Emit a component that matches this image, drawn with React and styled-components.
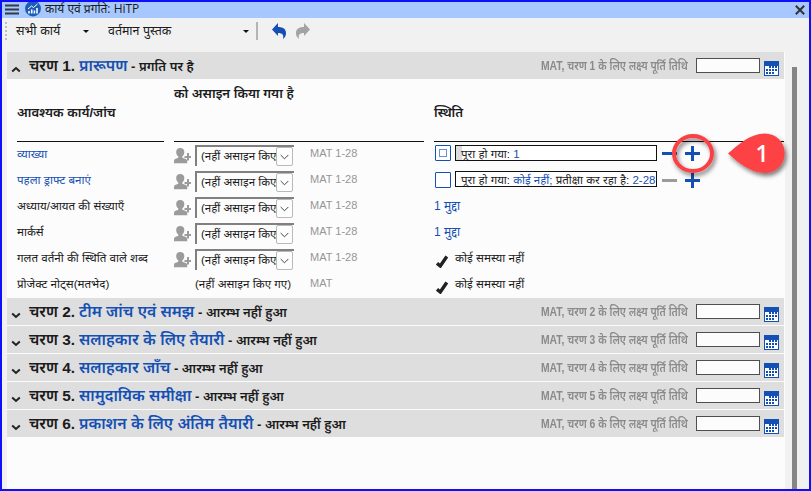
import React from "react";
import styled, { createGlobalStyle } from "styled-components";

const BLUE = "#1450b4";
const SANS = '"Liberation Sans", "Noto Sans Devanagari", "Noto Sans", sans-serif';
const UI = '"Open Sans", "Noto Sans Devanagari", "Noto Sans", sans-serif';

const Global = createGlobalStyle`
  * { box-sizing: border-box; }
  body { margin: 0; overflow: hidden; }
`;

const Window = styled.div`
  position: relative;
  width: 811px;
  height: 491px;
  border: 2px solid #0f0ffa;
  background: #f1f1f1;
  color: #1b1b1b;
  font-family: ${SANS};
  font-size: 12px;
  overflow: hidden;
  display: flex;
  flex-direction: column;
`;

const TitleBar = styled.header`
  height: 16px;
  flex: none;
  background: #a6c8ff;
  display: flex;
  align-items: center;
  padding: 0 4px 0 3px;
`;

const Label = styled.span`
  display: block;
  flex: none;
  white-space: nowrap;
  line-height: ${(p) => p.$lh || 24}px;
  width: ${(p) => (p.$w ? `${p.$w}px` : "auto")};
  color: ${(p) => p.$color || "inherit"};
  font-size: ${(p) => p.$size || 11.6}px;
`;

const TitleText = styled(Label)`
  font-family: ${UI};
  margin: 0 0 2px 4px;
  flex: 1;
`;

const BadgeSvg = styled.svg`
  flex: none;
  margin-left: 6px;
`;

const Toolbar = styled.div`
  height: 34px;
  flex: none;
  display: flex;
  align-items: center;
  padding: 0 0 8px 3px;
`;

const Grip = styled.div`
  width: 2px;
  height: 18px;
  margin-right: 9px;
  background: repeating-linear-gradient(#bdbdbd 0 2px, transparent 2px 4px);
`;

const Caret = styled.i`
  width: 0;
  height: 0;
  border: 3px solid transparent;
  border-top-color: #111;
  border-bottom: 0;
  margin-right: ${(p) => p.$gap}px;
`;

const Divider = styled.div`
  width: 2px;
  height: 18px;
  background: #b4b4b4;
  margin-right: 14px;
`;

const Main = styled.div`
  flex: 1;
  display: flex;
  padding-left: 5px;
`;

const Content = styled.main`
  width: 777px;
  margin-right: 8px;
  background: #fcfcfc;
  box-shadow: 1px 0 #fcfcfc;
`;

const ScrollThumb = styled.div`
  width: 5px;
  margin-top: 15px;
  background: #858585;
`;

const StageBar = styled.div`
  height: 27px;
  margin-bottom: 1px;
  background: #dedede;
  display: flex;
  align-items: center;
  padding-right: 5px;
`;

const Chevron = styled.svg`
  flex: none;
  width: 10px;
  height: 7px;
  margin: 8px 8px 0 4px;
`;

const StageTitle = styled.div`
  flex: 1;
  display: flex;
  align-items: baseline;
  white-space: pre;
  line-height: 27px;
  font-weight: 600;
  font-size: 15.8px;
`;

const StageNumber = styled.span`
  width: 50px;
  font-size: 15.4px;
`;

const StageName = styled.span`
  color: ${BLUE};
`;

const StageState = styled.span`
  font-size: 13px;
`;

const Due = styled(Label)`
  color: #8a8a8a;
  font-weight: 600;
  font-size: 12px;
  margin-right: 8px;
  transform: scaleX(0.865);
  transform-origin: right;
`;

const DateBox = styled.div`
  width: 64px;
  height: 15px;
  margin: 0 4px 0 0;
  border: 1px solid #4f4f4f;
  background: #fcfcfc;
`;

const CalSvg = styled.svg`
  flex: none;
  margin-top: 6px;
`;

const Table = styled.div`
  height: 218px;
  padding: 0 0 0 10px;
`;

const Columns = styled.div`
  display: grid;
  grid-template-columns: 147px 250px 350px;
  column-gap: 10px;
`;

const HeadCell = styled.div`
  height: 62px;
  border-bottom: 1px solid #111;
  padding-top: ${(p) => p.$top}px;
  font-weight: 600;
  font-size: 13.1px;
  white-space: nowrap;
  line-height: 26px;
`;

const Row = styled(Columns)`
  height: 26px;
`;

const Cell = styled.div`
  height: 26px;
  display: flex;
  align-items: flex-start;
`;

const PersonSvg = styled.svg`
  flex: none;
  margin: 5px 4px 0 0;
`;

const Unassigned = styled(Label)`
  margin-left: 21px;
  width: 115px;
`;

const Reference = styled(Label)`
  color: #969696;
  font-size: 11px;
  line-height: 22px;
`;

const Select = styled.div`
  width: 99px;
  height: 21px;
  margin: 3px 16px 0 0;
  padding-left: 4px;
  border: solid #808080;
  border-width: 2px 0 0 2px;
  display: flex;
  align-items: center;
  background: #fcfcfc;
`;

const SelectText = styled.span`
  width: 75px;
  line-height: 19px;
  overflow: hidden;
  white-space: nowrap;
  font-size: 11.5px;
`;

const SelectArrow = styled.span`
  width: 17px;
  height: 19px;
  border: 1px solid #b9b9b9;
  border-radius: 2px;
  background: #fdfdfd;
  display: flex;
  align-items: center;
  justify-content: center;
`;

const Check = styled.div`
  width: 16px;
  height: 16px;
  margin: ${(p) => (p.$partial ? 3 : 4)}px 4px 0 1px;
  border: 1px solid ${BLUE};
  border-radius: 1px;
  background: #fff;
  display: flex;
  align-items: center;
  justify-content: center;
`;

const CheckInner = styled.i`
  width: 8px;
  height: 8px;
  border: 1px solid #6b8fce;
`;

const Progress = styled.div`
  width: 202px;
  height: 16px;
  margin: 3px 5px 0 0;
  border: 1px solid #111;
  white-space: pre;
  line-height: 16px;
  font-size: 11.5px;
  padding-left: 5px;
  background: ${(p) => (p.$started ? "linear-gradient(90deg, #dcdcdc 6px, #fff 6px)" : "#fff")};
`;

const Link = styled.span`
  color: ${BLUE};
`;

const Steps = styled.svg`
  flex: none;
  margin: ${(p) => p.$top}px 0 0 0;
`;

const Tick = styled.svg`
  flex: none;
  margin: 9px 7px 0 2px;
`;

const CleanText = styled(Label)`
  font-size: 11.7px;
`;

const Marker = styled.svg`
  position: absolute;
  left: 658px;
  top: 123px;
  overflow: visible;
  font-family: ${UI};
`;

function Calendar() {
  const dots = [];
  for (let r = 0; r < 3; r++)
    for (let c = 0; c < 4; c++)
      if (!(r === 0 && c === 0) && !(r === 2 && c === 3))
        dots.push(<rect key={`${r}${c}`} x={2 + c * 3} y={5 + r * 3} width="2" height="2" fill={BLUE} />);
  return (
    <CalSvg width="15" height="15" shapeRendering="crispEdges">
      <rect width="15" height="15" fill={BLUE} />
      <rect x="1" y="5" width="13" height="9" fill="#fff" />
      {dots}
    </CalSvg>
  );
}

function Stage({ n, name, state, open }) {
  return (
    <StageBar>
      <Chevron viewBox="0 0 10 7">
        <path d={open ? "M1.2 5.5 5 2l3.8 3.5" : "M1.2 1.5 5 5l3.8-3.5"} fill="none" stroke="#222" strokeWidth="2" />
      </Chevron>
      <StageTitle>
        <StageNumber>चरण {n}.</StageNumber>
        <StageName>{name}</StageName>
        <StageState> - {state}</StageState>
      </StageTitle>
      <Due>MAT, चरण {n} के लिए लक्ष्य पूर्ति तिथि</Due>
      <DateBox />
      <Calendar />
    </StageBar>
  );
}

function Assignee() {
  return (
    <>
      <PersonSvg width="17" height="17" fill="#9b9b9b">
        <path d="M6.200 1C9 1 10.500 2.800 10.300 5.400 10.200 7.400 9.200 8.600 8.300 9.400v1.300l3.600 1.400c.9.4 1.400 1 1.400 4.200H0c0-3.200.2-3.800 1.100-4.200l3.200-1.400V9.400C3.300 8.600 2.300 7.400 2.200 5.400 2 2.800 3.500 1 6.200 1Z" />
        <path d="M13 6h2v3h2v2h-2v2.500h-2V11h-2.500V9H13Z" />
      </PersonSvg>
      <Select>
        <SelectText>(नहीं असाइन किए</SelectText>
        <SelectArrow>
          <svg width="9" height="6"><path d="M.7 1 4.500 4.800 8.300 1" fill="none" stroke="#444" /></svg>
        </SelectArrow>
      </Select>
    </>
  );
}

function PlusMinus({ active, top }) {
  return (
    <Steps width="40" height="16" $top={top} shapeRendering="crispEdges">
      <rect x="0" y="7" width="15" height="3" fill={active ? BLUE : "#9b9b9b"} />
      <path d="M23 7h6V1h3v6h6v3h-6v6h-3v-6h-6Z" fill={BLUE} />
    </Steps>
  );
}

function Callout() {
  return (
    <Marker width="130" height="64">
      <defs>
        <filter id="soft" x="-30%" y="-30%" width="170%" height="170%">
          <feDropShadow dx="2" dy="3" stdDeviation="2" floodColor="#000" floodOpacity="0.5" />
        </filter>
      </defs>
      <ellipse cx="33" cy="28.500" rx="19" ry="17.500" fill="none" stroke="#f94144" strokeWidth="4" filter="url(#soft)" />
      <path d="M68 28.500C78 20 90 8.500 105 8.500a19.800 19.800 0 0 1 0 39.600C90 48 78 37 68 28.500Z" fill="#fc4345" filter="url(#soft)" />
      <text x="102" y="36.500" textAnchor="middle" fontSize="23" fontWeight="600" fill="#fff">1</text>
    </Marker>
  );
}

const tasks = [
  { name: "व्याख्या", link: true, kind: "started" },
  { name: "पहला ड्राफ्ट बनाएं", link: true, kind: "waiting" },
  { name: "अध्याय/आयत की संख्याएँ", kind: "issue" },
  { name: "मार्कर्स", kind: "issue" },
  { name: "गलत वर्तनी की स्थिति वाले शब्द", kind: "clean" },
  { name: "प्रोजेक्ट नोट्स(मतभेद)", kind: "clean", unassigned: true },
];

function Status({ kind }) {
  if (kind === "clean")
    return (
      <>
        <Tick width="12" height="13"><path d="M1 8.300 4.300 11 10.800 1.500" fill="none" stroke="#222" strokeWidth="3.400" /></Tick>
        <CleanText>कोई समस्या नहीं</CleanText>
      </>
    );
  if (kind === "issue") return <Label $color={BLUE} $size={12}>1 मुद्दा</Label>;
  if (kind === "started")
    return (
      <>
        <Check $partial><CheckInner /></Check>
        <Progress $started>पूरा हो गया: <Link>1</Link></Progress>
        <PlusMinus active top={3} />
      </>
    );
  return (
    <>
      <Check />
      <Progress>पूरा हो गया: <Link>कोई नहीं;</Link> प्रतीक्षा कर रहा है: <Link>2-28</Link></Progress>
      <PlusMinus top={4} />
    </>
  );
}

export default function App() {
  return (
    <Window>
      <Global />
      <TitleBar>
        <svg width="14" height="12"><path d="M0 1.500h14M0 5.500h14M0 9.500h14" stroke="#333a45" strokeWidth="2" /></svg>
        <BadgeSvg width="16" height="16">
          <circle cx="8" cy="6.500" r="7.900" fill="#1c5cb8" />
          <path d="M4 11.500V9M6.700 11.500V7.500M9.400 11.500V8.500M12 11.500V6" stroke="#fff" strokeWidth="1.600" />
          <path d="M3 7 6.500 4 8.500 5.500 12.500 2" fill="none" stroke="#fff" />
        </BadgeSvg>
        <TitleText $size={12}>कार्य एवं प्रगति: HiTP</TitleText>
        <svg width="10" height="10"><path d="M.8.800 9.200 9.200M9.200.800.800 9.200" stroke="#333" strokeWidth="2" /></svg>
      </TitleBar>
      <Toolbar>
        <Grip />
        <Label $w={67} $size={12.6}>सभी कार्य</Label>
        <Caret $gap={19} />
        <Label $w={135} $size={12.4}>वर्तमान पुस्तक</Label>
        <Caret $gap={7} />
        <Divider />
        <svg width="15" height="16"><path d="M6 0v4c5 0 8 2 8 6 0 3-1 4.500-3 6 1-4-.5-6-5-6v3L0 6.500Z" fill={BLUE} /></svg>
        <svg width="24" height="16"><path d="M17 0v4c-5 0-8 2-8 6 0 3 1 4.500 3 6-1-4 .5-6 5-6v3l6-6.500Z" fill="#a3a3a3" /></svg>
      </Toolbar>
      <Main>
        <Content>
          <Stage n={1} name="प्रारूपण" state="प्रगति पर है" open />
          <Table>
            <Columns>
              <HeadCell $top={20}>आवश्यक कार्य/जांच</HeadCell>
              <HeadCell $top={1}>को असाइन किया गया है</HeadCell>
              <HeadCell $top={20}>स्थिति</HeadCell>
            </Columns>
            {tasks.map((t) => (
              <Row key={t.name}>
                <Cell><Label $color={t.link && BLUE}>{t.name}</Label></Cell>
                <Cell>
                  {t.unassigned ? <Unassigned>(नहीं असाइन किए गए)</Unassigned> : <Assignee />}
                  <Reference>{t.unassigned ? "MAT" : "MAT 1-28"}</Reference>
                </Cell>
                <Cell><Status kind={t.kind} /></Cell>
              </Row>
            ))}
          </Table>
          <Stage n={2} name="टीम जांच एवं समझ" state="आरम्भ नहीं हुआ" />
          <Stage n={3} name="सलाहकार के लिए तैयारी" state="आरम्भ नहीं हुआ" />
          <Stage n={4} name="सलाहकार जाँच" state="आरम्भ नहीं हुआ" />
          <Stage n={5} name="सामुदायिक समीक्षा" state="आरम्भ नहीं हुआ" />
          <Stage n={6} name="प्रकाशन के लिए अंतिम तैयारी" state="आरम्भ नहीं हुआ" />
        </Content>
        <ScrollThumb />
      </Main>
      <Callout />
    </Window>
  );
}
